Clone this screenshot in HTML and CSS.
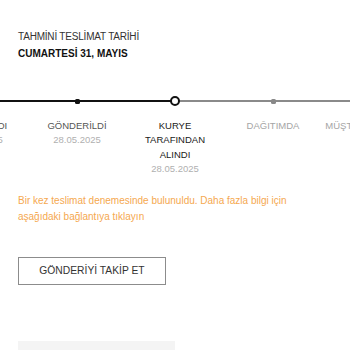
FILE: index.html
```html
<!DOCTYPE html>
<html lang="tr">
<head>
    <meta charset="utf-8">
    <title>Teslimat Durumu</title>
    <meta name="viewport" content="width=device-width, initial-scale=1">
    <link rel="stylesheet" href="styles.css">
</head>
<body>
    <div class="delivery">
        <div class="delivery-label">TAHMİNİ TESLİMAT TARİHİ</div>
        <div class="delivery-date">CUMARTESİ 31, MAYIS</div>
    </div>

    <div class="timeline">
        <div class="track">
            <div class="step done">
                <div class="marker"><span class="dot"></span></div>
                <div class="step-name">HAZIRLANDI</div>
                <div class="step-date">27.05.2025</div>
            </div>
            <div class="step done">
                <div class="marker"><span class="dot"></span></div>
                <div class="step-name">GÖNDERİLDİ</div>
                <div class="step-date">28.05.2025</div>
            </div>
            <div class="step current">
                <div class="marker"><span class="dot"></span></div>
                <div class="step-name">KURYE<br>TARAFINDAN<br>ALINDI</div>
                <div class="step-date">28.05.2025</div>
            </div>
            <div class="step todo">
                <div class="marker"><span class="dot"></span></div>
                <div class="step-name">DAĞITIMDA</div>
            </div>
            <div class="step todo">
                <div class="marker"><span class="dot"></span></div>
                <div class="step-name">MÜŞTERİYE ULAŞTI</div>
            </div>
        </div>
    </div>

    <p class="notice">Bir kez teslimat denemesinde bulunuldu. Daha fazla bilgi için aşağıdaki bağlantıya tıklayın</p>

    <button class="track-btn" type="button">GÖNDERİYİ TAKİP ET</button>

    <div class="panel"></div>
</body>
</html>
```

FILE: styles.css
```css
html {
    overflow: hidden;
}
body {
    margin: 0;
    font-family: 'Liberation Sans', Arial, sans-serif;
    background: #fff;
    color: #222;
}
.delivery {
    padding: 30px 18px 0 18px;
}
.delivery-label {
    font-size: 10px;
    line-height: 14px;
    letter-spacing: -0.2px;
    color: #333;
}
.delivery-date {
    margin-top: 3px;
    font-size: 10px;
    line-height: 14px;
    font-weight: 700;
    color: #111;
}
.timeline {
    margin-top: 35px;
    width: 100%;
    overflow: hidden;
}
.track {
    display: flex;
    margin-left: -70px;
}
.step {
    flex: 0 0 98px;
    display: flex;
    flex-direction: column;
    align-items: center;
    text-align: center;
    font-size: 9.5px;
    line-height: 14.4px;
}
.marker {
    position: relative;
    width: 100%;
    height: 10px;
    display: flex;
    align-items: center;
    justify-content: center;
}
.marker::before,
.marker::after {
    content: "";
    position: absolute;
    top: 4px;
    height: 2px;
    width: 50%;
    background: #111;
}
.marker::before {
    left: 0;
}
.marker::after {
    right: 0;
}
.dot {
    position: relative;
    z-index: 1;
    width: 5px;
    height: 5px;
    border-radius: 1.5px;
    background: #111;
}
.current .marker::after,
.todo .marker::before,
.todo .marker::after {
    background: #8a8a8a;
}
.current .dot {
    width: 6px;
    height: 6px;
    border: 2px solid #111;
    border-radius: 50%;
    background: #fff;
}
.todo .dot {
    background: #888;
}
.step-name {
    margin-top: 13px;
    color: #555;
    white-space: nowrap;
}
.current .step-name {
    color: #1a1a1a;
}
.todo .step-name {
    color: #a5a5a5;
}
.step-date {
    color: #b0b0b0;
}
.notice {
    margin: 16px 18px 0 18px;
    max-width: 290px;
    font-size: 10px;
    line-height: 16px;
    color: #f5a84f;
}
.track-btn {
    display: block;
    margin: 32px 0 0 18px;
    width: 148px;
    height: 28px;
    padding: 0;
    background: #fff;
    border: 1px solid #8c8c8c;
    border-radius: 0;
    font-family: 'Liberation Sans', Arial, sans-serif;
    font-size: 10.3px;
    color: #333;
    cursor: pointer;
}
.panel {
    margin: 56px 0 0 18px;
    width: 157px;
    height: 10px;
    background: #f4f4f4;
}
```
